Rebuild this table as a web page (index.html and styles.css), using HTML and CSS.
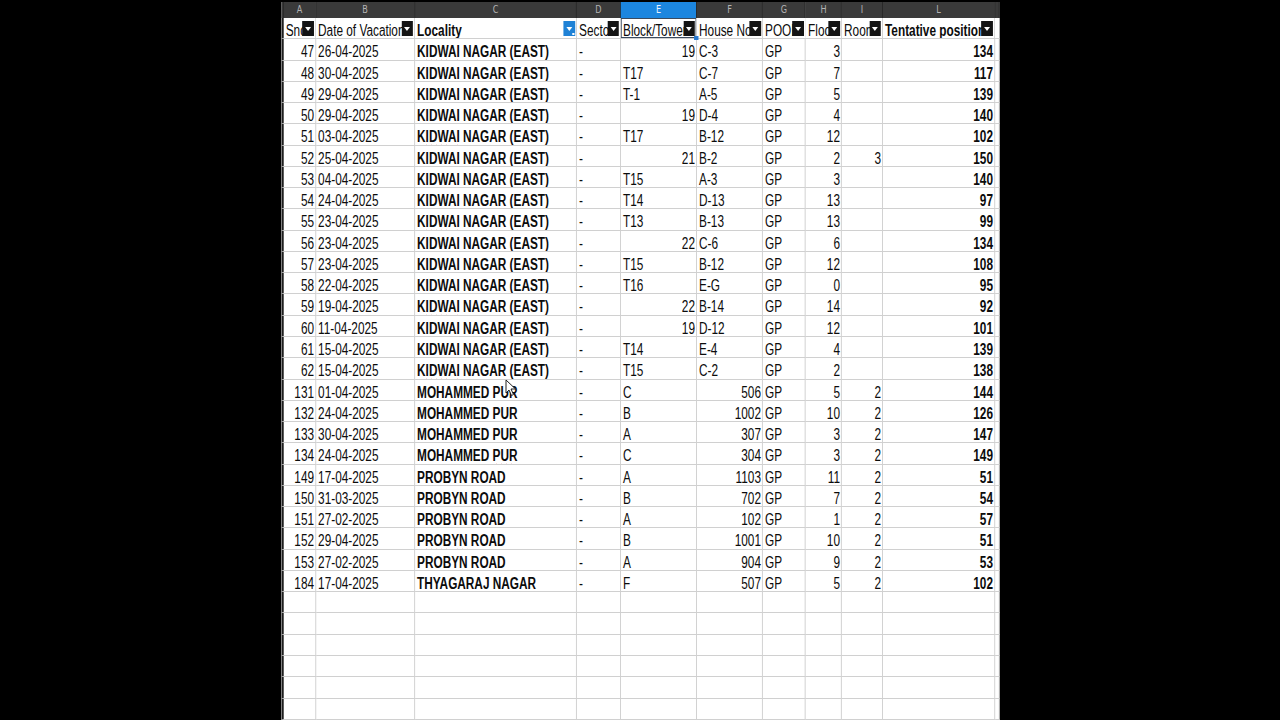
FILE: index.html
```html
<!DOCTYPE html>
<html>
<head>
<meta charset="utf-8">
<link rel="stylesheet" href="styles.css">
</head>
<body>
<div class="wrap">
<table class="sheet">
<colgroup>
<col class="w0"><col class="wa"><col class="wb"><col class="wc"><col class="wd"><col class="we"><col class="wf"><col class="wg"><col class="wh"><col class="wi"><col class="wl"><col class="wm">
</colgroup>
<tr class="letters"><th></th><th>A</th><th>B</th><th>C</th><th>D</th><th class="sel">E</th><th>F</th><th>G</th><th>H</th><th>I</th><th>L</th><th></th></tr>
<tr class="head">
<td class="rh"></td>
<td><span class="sp">Sno</span><i class="fb"></i></td>
<td>Date of Vacation<i class="fb"></i></td>
<td class="b">Locality<i class="fb on"></i></td>
<td>Sector<i class="fb"></i></td>
<td class="cur">Block/Tower<i class="fb"></i><i class="handle"></i></td>
<td>House No<i class="fb"></i></td>
<td>POOL<i class="fb"></i></td>
<td>Floor<i class="fb"></i></td>
<td>Room<i class="fb"></i></td>
<td class="b">Tentative position<i class="fb"></i></td>
<td></td>
</tr>
<tr><td class="rh"></td><td class="r">47</td><td>26-04-2025</td><td class="b"><span class="sp">KIDWAI</span> NAGAR (EAST)</td><td>-</td><td class="r">19</td><td>C-3</td><td>GP</td><td class="r">3</td><td class="r"></td><td class="r b">134</td><td></td></tr>
<tr><td class="rh"></td><td class="r">48</td><td>30-04-2025</td><td class="b"><span class="sp">KIDWAI</span> NAGAR (EAST)</td><td>-</td><td>T17</td><td>C-7</td><td>GP</td><td class="r">7</td><td class="r"></td><td class="r b">117</td><td></td></tr>
<tr><td class="rh"></td><td class="r">49</td><td>29-04-2025</td><td class="b"><span class="sp">KIDWAI</span> NAGAR (EAST)</td><td>-</td><td>T-1</td><td>A-5</td><td>GP</td><td class="r">5</td><td class="r"></td><td class="r b">139</td><td></td></tr>
<tr><td class="rh"></td><td class="r">50</td><td>29-04-2025</td><td class="b"><span class="sp">KIDWAI</span> NAGAR (EAST)</td><td>-</td><td class="r">19</td><td>D-4</td><td>GP</td><td class="r">4</td><td class="r"></td><td class="r b">140</td><td></td></tr>
<tr><td class="rh"></td><td class="r">51</td><td>03-04-2025</td><td class="b"><span class="sp">KIDWAI</span> NAGAR (EAST)</td><td>-</td><td>T17</td><td>B-12</td><td>GP</td><td class="r">12</td><td class="r"></td><td class="r b">102</td><td></td></tr>
<tr><td class="rh"></td><td class="r">52</td><td>25-04-2025</td><td class="b"><span class="sp">KIDWAI</span> NAGAR (EAST)</td><td>-</td><td class="r">21</td><td>B-2</td><td>GP</td><td class="r">2</td><td class="r">3</td><td class="r b">150</td><td></td></tr>
<tr><td class="rh"></td><td class="r">53</td><td>04-04-2025</td><td class="b"><span class="sp">KIDWAI</span> NAGAR (EAST)</td><td>-</td><td>T15</td><td>A-3</td><td>GP</td><td class="r">3</td><td class="r"></td><td class="r b">140</td><td></td></tr>
<tr><td class="rh"></td><td class="r">54</td><td>24-04-2025</td><td class="b"><span class="sp">KIDWAI</span> NAGAR (EAST)</td><td>-</td><td>T14</td><td>D-13</td><td>GP</td><td class="r">13</td><td class="r"></td><td class="r b">97</td><td></td></tr>
<tr><td class="rh"></td><td class="r">55</td><td>23-04-2025</td><td class="b"><span class="sp">KIDWAI</span> NAGAR (EAST)</td><td>-</td><td>T13</td><td>B-13</td><td>GP</td><td class="r">13</td><td class="r"></td><td class="r b">99</td><td></td></tr>
<tr><td class="rh"></td><td class="r">56</td><td>23-04-2025</td><td class="b"><span class="sp">KIDWAI</span> NAGAR (EAST)</td><td>-</td><td class="r">22</td><td>C-6</td><td>GP</td><td class="r">6</td><td class="r"></td><td class="r b">134</td><td></td></tr>
<tr><td class="rh"></td><td class="r">57</td><td>23-04-2025</td><td class="b"><span class="sp">KIDWAI</span> NAGAR (EAST)</td><td>-</td><td>T15</td><td>B-12</td><td>GP</td><td class="r">12</td><td class="r"></td><td class="r b">108</td><td></td></tr>
<tr><td class="rh"></td><td class="r">58</td><td>22-04-2025</td><td class="b"><span class="sp">KIDWAI</span> NAGAR (EAST)</td><td>-</td><td>T16</td><td>E-G</td><td>GP</td><td class="r">0</td><td class="r"></td><td class="r b">95</td><td></td></tr>
<tr><td class="rh"></td><td class="r">59</td><td>19-04-2025</td><td class="b"><span class="sp">KIDWAI</span> NAGAR (EAST)</td><td>-</td><td class="r">22</td><td>B-14</td><td>GP</td><td class="r">14</td><td class="r"></td><td class="r b">92</td><td></td></tr>
<tr><td class="rh"></td><td class="r">60</td><td>11-04-2025</td><td class="b"><span class="sp">KIDWAI</span> NAGAR (EAST)</td><td>-</td><td class="r">19</td><td>D-12</td><td>GP</td><td class="r">12</td><td class="r"></td><td class="r b">101</td><td></td></tr>
<tr><td class="rh"></td><td class="r">61</td><td>15-04-2025</td><td class="b"><span class="sp">KIDWAI</span> NAGAR (EAST)</td><td>-</td><td>T14</td><td>E-4</td><td>GP</td><td class="r">4</td><td class="r"></td><td class="r b">139</td><td></td></tr>
<tr><td class="rh"></td><td class="r">62</td><td>15-04-2025</td><td class="b"><span class="sp">KIDWAI</span> NAGAR (EAST)</td><td>-</td><td>T15</td><td>C-2</td><td>GP</td><td class="r">2</td><td class="r"></td><td class="r b">138</td><td></td></tr>
<tr><td class="rh"></td><td class="r">131</td><td>01-04-2025</td><td class="b">MOHAMMED <span class="sp">PUR</span></td><td>-</td><td>C</td><td class="r">506</td><td>GP</td><td class="r">5</td><td class="r">2</td><td class="r b">144</td><td></td></tr>
<tr><td class="rh"></td><td class="r">132</td><td>24-04-2025</td><td class="b">MOHAMMED <span class="sp">PUR</span></td><td>-</td><td>B</td><td class="r">1002</td><td>GP</td><td class="r">10</td><td class="r">2</td><td class="r b">126</td><td></td></tr>
<tr><td class="rh"></td><td class="r">133</td><td>30-04-2025</td><td class="b">MOHAMMED <span class="sp">PUR</span></td><td>-</td><td>A</td><td class="r">307</td><td>GP</td><td class="r">3</td><td class="r">2</td><td class="r b">147</td><td></td></tr>
<tr><td class="rh"></td><td class="r">134</td><td>24-04-2025</td><td class="b">MOHAMMED <span class="sp">PUR</span></td><td>-</td><td>C</td><td class="r">304</td><td>GP</td><td class="r">3</td><td class="r">2</td><td class="r b">149</td><td></td></tr>
<tr><td class="rh"></td><td class="r">149</td><td>17-04-2025</td><td class="b"><span class="sp">PROBYN</span> ROAD</td><td>-</td><td>A</td><td class="r">1103</td><td>GP</td><td class="r">11</td><td class="r">2</td><td class="r b">51</td><td></td></tr>
<tr><td class="rh"></td><td class="r">150</td><td>31-03-2025</td><td class="b"><span class="sp">PROBYN</span> ROAD</td><td>-</td><td>B</td><td class="r">702</td><td>GP</td><td class="r">7</td><td class="r">2</td><td class="r b">54</td><td></td></tr>
<tr><td class="rh"></td><td class="r">151</td><td>27-02-2025</td><td class="b"><span class="sp">PROBYN</span> ROAD</td><td>-</td><td>A</td><td class="r">102</td><td>GP</td><td class="r">1</td><td class="r">2</td><td class="r b">57</td><td></td></tr>
<tr><td class="rh"></td><td class="r">152</td><td>29-04-2025</td><td class="b"><span class="sp">PROBYN</span> ROAD</td><td>-</td><td>B</td><td class="r">1001</td><td>GP</td><td class="r">10</td><td class="r">2</td><td class="r b">51</td><td></td></tr>
<tr><td class="rh"></td><td class="r">153</td><td>27-02-2025</td><td class="b"><span class="sp">PROBYN</span> ROAD</td><td>-</td><td>A</td><td class="r">904</td><td>GP</td><td class="r">9</td><td class="r">2</td><td class="r b">53</td><td></td></tr>
<tr><td class="rh"></td><td class="r">184</td><td>17-04-2025</td><td class="b"><span class="sp">THYAGARAJ</span> NAGAR</td><td>-</td><td>F</td><td class="r">507</td><td>GP</td><td class="r">5</td><td class="r">2</td><td class="r b">102</td><td></td></tr>
<tr><td class="rh"></td><td></td><td></td><td></td><td></td><td></td><td></td><td></td><td></td><td></td><td></td><td></td></tr>
<tr><td class="rh"></td><td></td><td></td><td></td><td></td><td></td><td></td><td></td><td></td><td></td><td></td><td></td></tr>
<tr><td class="rh"></td><td></td><td></td><td></td><td></td><td></td><td></td><td></td><td></td><td></td><td></td><td></td></tr>
<tr><td class="rh"></td><td></td><td></td><td></td><td></td><td></td><td></td><td></td><td></td><td></td><td></td><td></td></tr>
<tr><td class="rh"></td><td></td><td></td><td></td><td></td><td></td><td></td><td></td><td></td><td></td><td></td><td></td></tr>
<tr><td class="rh"></td><td></td><td></td><td></td><td></td><td></td><td></td><td></td><td></td><td></td><td></td><td></td></tr>
<tr><td class="rh"></td><td></td><td></td><td></td><td></td><td></td><td></td><td></td><td></td><td></td><td></td><td></td></tr>
</table>
</div>
<svg class="cursor" width="12" height="18" viewBox="0 0 12 18"><path d="M1 1 L1 14 L4 11 L6.5 16.5 L8.5 15.5 L6 10 L10.5 10 Z" fill="#fff" stroke="#222" stroke-width="1"/></svg>
</body>
</html>
```
FILE: styles.css
```css
html, body {
  margin: 0;
  padding: 0;
  background: #000;
  height: 720px;
  overflow: hidden;
}
body {
  display: flex;
  justify-content: center;
  position: relative;
}
.wrap {
  margin-top: 2px;
  margin-left: 2px;
  transform: scaleX(0.738);
  transform-origin: center top;
  background: #fff;
  flex: none;
}
.sheet {
  border-collapse: collapse;
  table-layout: fixed;
  width: 972.9px;
  font-family: "Liberation Sans", Arial, sans-serif;
  font-size: 16px;
  color: #0c0c0c;
}
.w0 { width: 2.71px; }
.wa { width: 43.36px; }
.wb { width: 134.15px; }
.wc { width: 219.51px; }
.wd { width: 59.62px; }
.we { width: 102.98px; }
.wf { width: 89.43px; }
.wg { width: 58.27px; }
.wh { width: 48.78px; }
.wi { width: 55.56px; }
.wl { width: 151.76px; }
.wm { width: 6.78px; }

tr { height: 21.28px; }
tr.letters { height: 15.5px; }
.letters th {
  height: 15.5px;
  padding: 0;
  background: #3a3a3a;
  color: #b4b4b4;
  font-family: "DejaVu Sans", sans-serif;
  font-weight: normal;
  font-size: 11px;
  line-height: 15px;
  text-align: center;
  border-right: 1px solid #161616;
}
.letters th.sel {
  background: #1c86df;
  color: #e8f2ff;
}
td {
  padding: 5px 1px 0 3px;
  border-right: 1px solid #c2c2c2;
  border-bottom: 1px solid #d0d0d0;
  white-space: nowrap;
  overflow: hidden;
  line-height: 15px;
  vertical-align: top;
  background: #fff;
}
td.rh {
  background: #1e1e1e;
  padding: 0;
  border-right: none;
  border-bottom: 1px solid #9a9a9a;
}
td.r { text-align: right; padding-right: 1.5px; }
td.b { font-weight: bold; }
.head td { position: relative; }
.sp {
  text-decoration: underline wavy #d8352a;
  text-decoration-thickness: 1px;
  text-underline-offset: 2px;
}
.fb {
  position: absolute;
  right: 1.5px;
  top: 3.5px;
  width: 15.6px;
  height: 15px;
  background: #141414;
}
.fb::after {
  content: "";
  position: absolute;
  left: 3.8px;
  top: 6px;
  border-left: 4px solid transparent;
  border-right: 4px solid transparent;
  border-top: 4px solid #fff;
}
.fb.on { background: #1f82d6; }
.fb.on::before {
  content: "";
  position: absolute;
  right: 1px;
  bottom: 1px;
  width: 3px;
  height: 2px;
  background: #fff;
}
td.cur { box-shadow: inset 0 0 0 1px #3a4a5e; overflow: visible; }
.handle {
  position: absolute;
  right: -3px;
  bottom: -2px;
  width: 6px;
  height: 4px;
  background: #2a7bd0;
  z-index: 2;
}
.cursor {
  position: absolute;
  left: 505px;
  top: 379px;
}
```
